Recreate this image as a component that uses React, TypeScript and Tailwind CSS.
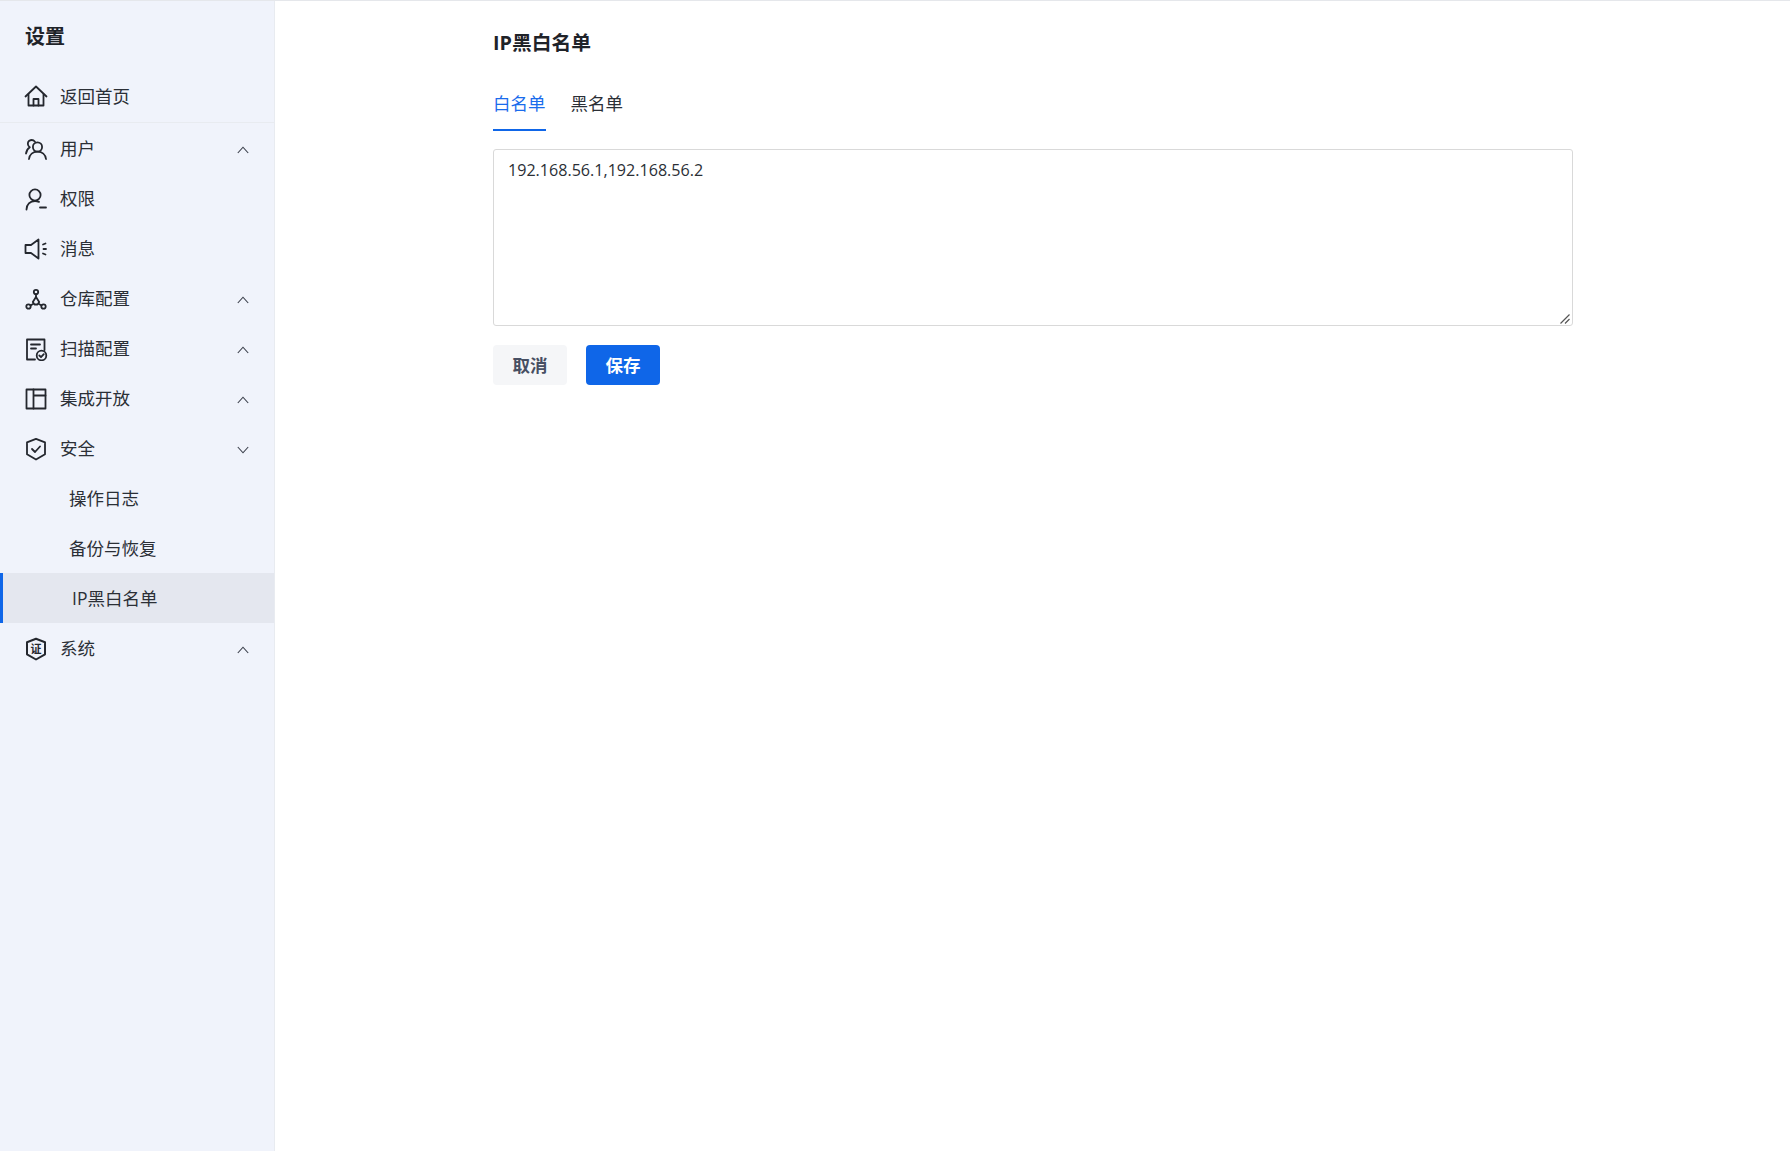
import React from "react";

const S = { fill: "none", stroke: "currentColor", strokeWidth: 1.8, strokeLinecap: "round" as const, strokeLinejoin: "round" as const };

function Ic({ children }: { children: React.ReactNode }) {
  return (
    <svg viewBox="0 0 24 24" className="w-6 h-6 shrink-0 text-[#24272e]" {...S}>
      {children}
    </svg>
  );
}

const Home = () => (
  <Ic>
    <path d="M1.5 12.500 12 2.500l10.500 10" />
    <path d="M4.500 10.500V21.500h15V10.500" />
    <path d="M9.500 21.500v-6.500h5v6.500" />
  </Ic>
);
const Users = () => (
  <Ic>
    <circle cx="13.500" cy="10" r="4.600" />
    <path d="M5 22c.5-4.500 4-7.400 8.500-7.400S21.500 17.500 22 22" />
    <path d="M11 4.800A4.500 4.500 0 0 0 5.200 3.800C3.200 5.500 3.400 8.600 5.800 10.200 3.800 11.500 2.400 13.800 2 16.500" />
  </Ic>
);
const UserMinus = () => (
  <Ic>
    <circle cx="11" cy="8" r="5.600" />
    <path d="M2.500 22.500c0-5 3.500-8.500 8.500-8.500 1.500 0 2.800.3 4 .9" />
    <path d="M16 20.500h6" />
  </Ic>
);
const Speaker = () => (
  <Ic>
    <path d="M14.500 2.500v19L7 16H1.500V8H7z" />
    <path d="M19 7.500l2.500-1M19.500 12h2.500M19 16.500l2.500 1" />
  </Ic>
);
const Nodes = () => (
  <Ic>
    <path d="M12 10l3.200 5-1.700 2.500h-3L8.800 15z" />
    <circle cx="12" cy="5" r="2.200" />
    <circle cx="4.500" cy="19.500" r="2.200" />
    <circle cx="19.500" cy="19.500" r="2.200" />
    <path d="M12 7.200v3M6.500 18.500l2.500-1.500M17.500 18.500l-2.500-1.500" />
  </Ic>
);
const DocCheck = () => (
  <Ic>
    <path d="M11 22.500H3V2.500h17.500v10.500" />
    <path d="M7 7.500h9M7 11.500h5" />
    <circle cx="17.500" cy="18.500" r="4.800" />
    <path d="M15.300 18.500l1.700 1.700 2.800-3" />
  </Ic>
);
const Layout = () => (
  <Ic>
    <rect x="2.500" y="2.500" width="19" height="19" />
    <path d="M9.500 2.500v19M9.500 8.500h12" />
  </Ic>
);
const Shield = () => (
  <Ic>
    <path d="M12 1.800 21 5.300v12L12 22.500 3 17.300v-12z" />
    <path d="M8 12l3 3 5-5.500" />
  </Ic>
);
const Cert = () => (
  <svg viewBox="0 0 24 24" className="w-6 h-6 shrink-0 text-[#24272e]">
    <path d="M12 1.800 21 5.300v12L12 22.500 3 17.300v-12z" fill="none" stroke="currentColor" strokeWidth="2" strokeLinejoin="round" />
    <text x="12" y="16" textAnchor="middle" fontSize="11" fontWeight="700" fill="currentColor" fontFamily="'Noto Sans CJK SC', sans-serif">证</text>
  </svg>
);

const Up = () => (
  <svg viewBox="0 0 12 8" className="w-3 h-2 shrink-0 mt-[3px] text-[#3a3f4a]" fill="none" stroke="currentColor" strokeWidth="1.100">
    <path d="M.8 7 6 1.200 11.200 7" />
  </svg>
);
const Down = () => (
  <svg viewBox="0 0 12 8" className="w-3 h-2 shrink-0 mt-[3px] text-[#3a3f4a]" fill="none" stroke="currentColor" strokeWidth="1.100">
    <path d="M.8 1 6 6.800 11.200 1" />
  </svg>
);

function Row({ icon, label, arrow }: { icon: React.ReactNode; label: string; arrow?: "up" | "down" }) {
  return (
    <div className="h-[50px] flex items-center pl-6 pr-[25px] gap-3">
      <span className="mt-px">{icon}</span>
      <span className="flex-1">{label}</span>
      {arrow === "up" && <Up />}
      {arrow === "down" && <Down />}
    </div>
  );
}

function SubRow({ label, active }: { label: string; active?: boolean }) {
  return (
    <div
      className={
        active
          ? "h-[50px] flex items-center pl-[69px] bg-[#e4e7ef] border-l-[3px] border-[#0f66e8]"
          : "h-[50px] flex items-center pl-[69px]"
      }
    >
      {label}
    </div>
  );
}

export default function App() {
  return (
    <div
      className="flex h-screen bg-white border-t border-[#e5e7eb] text-[17.5px] text-[#2b2f36] overflow-hidden"
      style={{ fontFamily: "'Open Sans', 'Noto Sans CJK SC', sans-serif" }}
    >
      <aside className="w-[275px] shrink-0 bg-[#f0f3fb] border-r border-[#e8ebf0]">
        <div className="h-[72px] pl-[25px] pt-5 text-[20px] font-bold leading-[32px] text-[#1f2329]">设置</div>
        <div className="border-b border-[#e8ebf0] h-[50px] flex items-center pl-6 pb-[3px] gap-3">
          <Home />
          <span>返回首页</span>
        </div>
        <Row icon={<Users />} label="用户" arrow="up" />
        <Row icon={<UserMinus />} label="权限" />
        <Row icon={<Speaker />} label="消息" />
        <Row icon={<Nodes />} label="仓库配置" arrow="up" />
        <Row icon={<DocCheck />} label="扫描配置" arrow="up" />
        <Row icon={<Layout />} label="集成开放" arrow="up" />
        <Row icon={<Shield />} label="安全" arrow="down" />
        <SubRow label="操作日志" />
        <SubRow label="备份与恢复" />
        <SubRow label="IP黑白名单" active />
        <Row icon={<Cert />} label="系统" arrow="up" />
      </aside>
      <main className="flex-1 pl-[218px] pt-[26px]">
        <div className="w-[1080px]">
          <h1 className="text-[19.8px] font-bold leading-[32px] text-[#1f2329]">IP黑白名单</h1>
          <div className="flex gap-[25px] mt-[22px] h-[50px]">
            <div className="h-[50px] pt-[4px] leading-[36px] text-[#1a6cec] border-b-2 border-[#0f66e8]">白名单</div>
            <div className="h-[50px] pt-[4px] leading-[36px]">黑名单</div>
          </div>
          <div className="relative mt-[18px]">
            <textarea
              readOnly
              className="block resize-none w-full h-[177px] border border-[#d9d9d9] rounded-[3px] px-[14px] py-[8px] text-[16.1px] leading-6 text-[#2b2f36]"
              value="192.168.56.1,192.168.56.2"
            />
            <svg viewBox="0 0 10 10" className="absolute right-[3px] bottom-[2px] w-[10px] h-[10px] text-[#555]" fill="none" stroke="currentColor" strokeWidth="1.200">
              <path d="M.5 9.500 9.500.5M5 9.500 9.500 5" />
            </svg>
          </div>
          <div className="flex gap-[19px] mt-[19px]">
            <button className="w-[74px] h-10 rounded-[4px] bg-[#f5f6f8] text-[#474f63] font-bold">取消</button>
            <button className="w-[74px] h-10 rounded-[4px] bg-[#0f66e8] text-white font-bold">保存</button>
          </div>
        </div>
      </main>
    </div>
  );
}
